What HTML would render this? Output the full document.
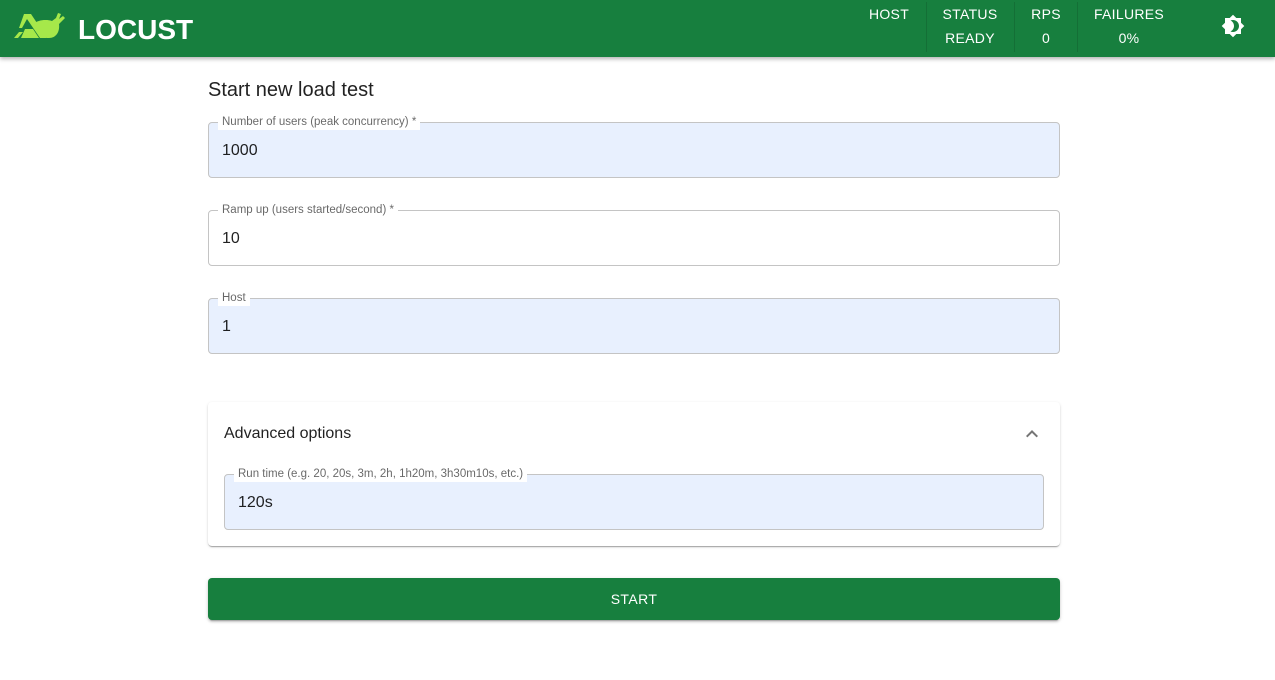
<!DOCTYPE html>
<html><head><meta charset="utf-8"><style>
body{margin:0;width:1275px;height:680px;background:#fff;font-family:"Liberation Sans",Arial,sans-serif;color:rgba(0,0,0,.87);position:relative;overflow:hidden}
.hdr{position:absolute;left:0;top:0;width:1275px;height:57px;background:#177f3e;box-shadow:0 2px 4px rgba(0,0,0,.3);color:#fff}
.logo{position:absolute;left:14px;top:12px}
.lt{position:absolute;left:78px;top:14px;font-size:28px;font-weight:bold;letter-spacing:0px}
.st{position:absolute;top:-1px;height:50px;font-size:14px;text-align:center;letter-spacing:.3px}
.st div{position:absolute;width:100%}
.sep{position:absolute;top:2px;width:1px;height:50px;background:rgba(0,0,0,.12)}
h2{position:absolute;left:208px;top:79px;margin:0;font-size:20px;font-weight:normal}
.f{position:absolute;left:208px;width:850px;height:54px;border:1px solid #c4c4c4;border-radius:4px;background:#e8f0fe}
.f.w{background:#fff}
.f .l{position:absolute;left:9px;top:-9px;background:#fff;padding:0 4px;font-size:11.5px;color:rgba(0,0,0,.6);line-height:16px}
.f .v{position:absolute;left:13px;top:19px;font-size:16px}
.acc{position:absolute;left:208px;top:402px;width:852px;height:144px;background:#fff;border-radius:4px;box-shadow:0 2px 1px -1px rgba(0,0,0,.2),0 1px 1px rgba(0,0,0,.14),0 1px 3px rgba(0,0,0,.12)}
.btn{position:absolute;left:208px;top:578px;width:852px;height:42px;background:#177f3e;border-radius:4px;color:#fff;text-align:center;line-height:42px;font-size:14px;letter-spacing:.4px;box-shadow:0 3px 1px -2px rgba(0,0,0,.2),0 2px 2px rgba(0,0,0,.14),0 1px 5px rgba(0,0,0,.12)}
</style></head><body>
<div class="hdr">
<svg class="logo" width="56" height="28" viewBox="0 0 56 28"><g fill="#a6e84a"><path d="M0 26 L5 20 L9 20 L4 26Z"/><path d="M10 2 L17 2 L33 26 L26 26 L13 7 L8 16 L5 16Z"/><path d="M19 12 C24 8 32 7 38 9 L42 6 L44 1 L47 2 L45 7 L49 4 L51 6 L45 12 C46 20 42 26 35 26 L33 26 Z"/><path d="M11 17 L19 17 L25 26 L7 26Z"/></g></svg>
<div class="lt">LOCUST</div>
<div class="st" style="left:858px;width:62px"><div style="top:7px">HOST</div></div>
<div class="sep" style="left:926px"></div>
<div class="st" style="left:930px;width:80px"><div style="top:7px">STATUS</div><div style="top:31px">READY</div></div>
<div class="sep" style="left:1014px"></div>
<div class="st" style="left:1016px;width:60px"><div style="top:7px">RPS</div><div style="top:31px">0</div></div>
<div class="sep" style="left:1077px"></div>
<div class="st" style="left:1080px;width:98px"><div style="top:7px">FAILURES</div><div style="top:31px">0%</div></div>
<svg style="position:absolute;left:1221px;top:14px" width="24" height="24" viewBox="0 0 24 24"><path fill="#fff" d="M20 8.69V4h-4.69L12 .69 8.69 4H4v4.69L.69 12 4 15.31V20h4.69L12 23.31 15.310 20H20v-4.69L23.31 12 20 8.69zM12 18c-.89 0-1.74-.2-2.5-.55C11.56 16.5 13 14.420 13 12s-1.44-4.5-3.5-5.45C10.26 6.2 11.11 6 12 6c3.31 0 6 2.69 6 6s-2.69 6-6 6z"/></svg>
</div>
<h2>Start new load test</h2>
<div class="f" style="top:122px"><span class="l">Number of users (peak concurrency) *</span><span class="v">1000</span></div>
<div class="f w" style="top:210px"><span class="l">Ramp up (users started/second) *</span><span class="v">10</span></div>
<div class="f" style="top:298px"><span class="l">Host</span><span class="v">1</span></div>
<div class="acc">
<div style="position:absolute;left:16px;top:23px;font-size:16px">Advanced options</div>
<svg style="position:absolute;left:812px;top:20px" width="24" height="24" viewBox="0 0 24 24"><path fill="rgba(0,0,0,.54)" d="M7.41 15.41 12 10.83l4.59 4.58L18 14l-6-6-6 6z"/></svg>
<div class="f" style="left:16px;top:72px;width:818px"><span class="l">Run time (e.g. 20, 20s, 3m, 2h, 1h20m, 3h30m10s, etc.)</span><span class="v">120s</span></div>
</div>
<div class="btn">START</div>
</body></html>
